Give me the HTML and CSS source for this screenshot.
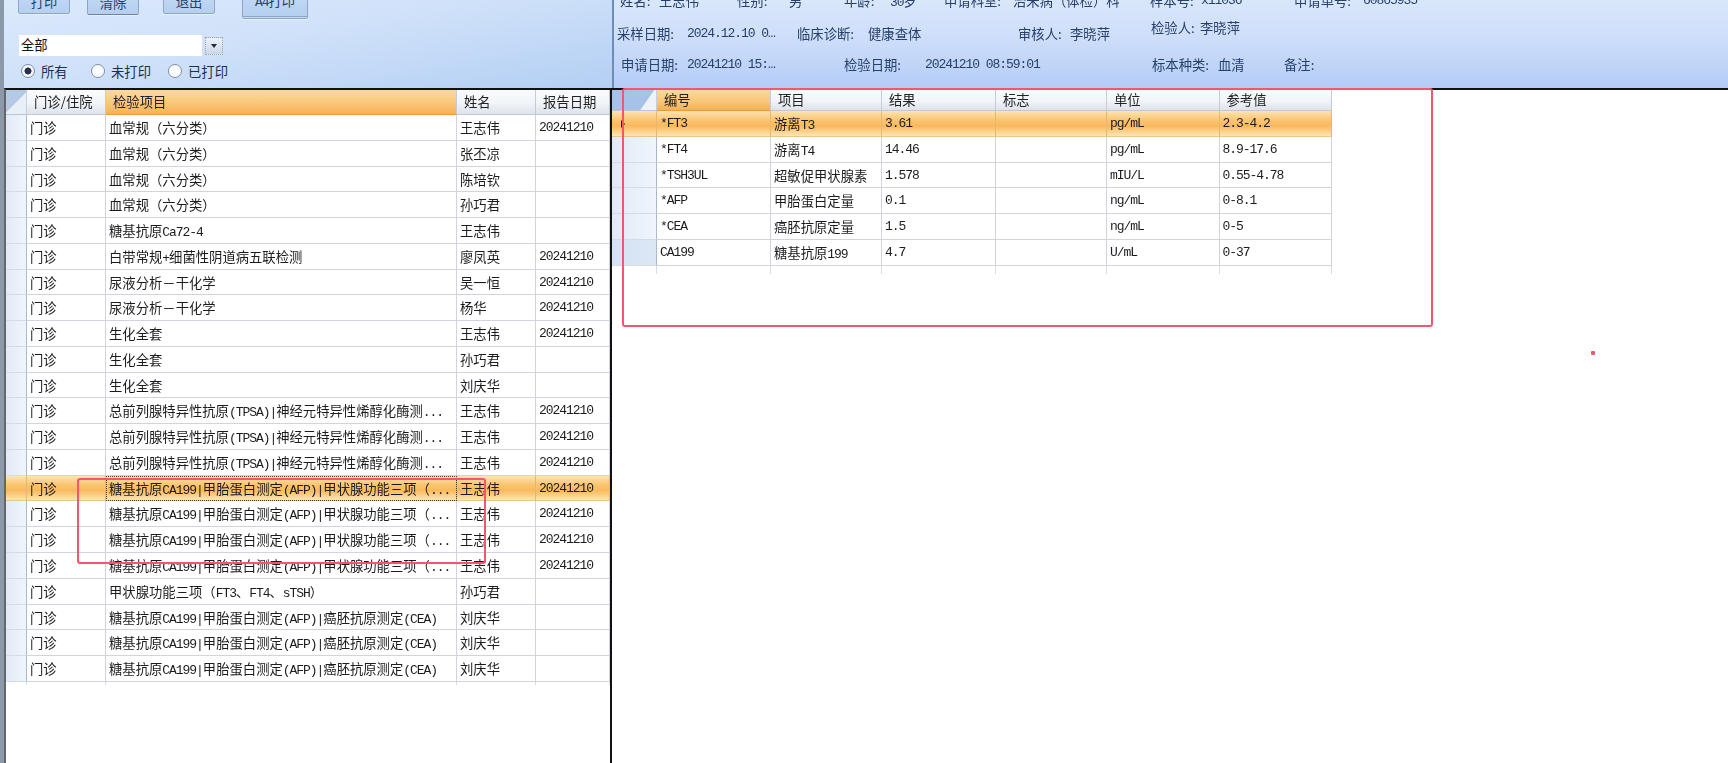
FILE: index.html
```html
<!DOCTYPE html>
<html lang="zh-CN">
<head>
<meta charset="utf-8">
<title>报告打印</title>
<link rel="stylesheet" href="styles.css">
</head>
<body>
<div class="page">
  <section class="left">
    <div class="toolbar">
      <div class="buttons">
        <button class="btn">打印</button>
        <button class="btn btn-clear">清除</button>
        <button class="btn btn-exit">退出</button>
        <button class="btn btn-a4"><span class="m">A4</span>打印</button>
      </div>
      <div class="combo"><span class="combo-text">全部</span><span class="combo-arrow"></span></div>
      <div class="radios">
        <span class="radio on"></span><span class="radio-label">所有</span>
        <span class="radio"></span><span class="radio-label">未打印</span>
        <span class="radio"></span><span class="radio-label">已打印</span>
      </div>
    </div>
    <div class="grid-left">
      <div class="lrow lhead">
        <div class="corner"></div>
        <div class="hc">门诊/住院</div>
        <div class="hc hc-on">检验项目</div>
        <div class="hc">姓名</div>
        <div class="hc">报告日期</div>
      </div>
      <div class="lrow"><div class="rh"></div><div class="c">门诊</div><div class="c">血常规（六分类）</div><div class="c">王志伟</div><div class="c m">20241210</div></div>
      <div class="lrow"><div class="rh"></div><div class="c">门诊</div><div class="c">血常规（六分类）</div><div class="c">张丕凉</div><div class="c m"></div></div>
      <div class="lrow"><div class="rh"></div><div class="c">门诊</div><div class="c">血常规（六分类）</div><div class="c">陈培钦</div><div class="c m"></div></div>
      <div class="lrow"><div class="rh"></div><div class="c">门诊</div><div class="c">血常规（六分类）</div><div class="c">孙巧君</div><div class="c m"></div></div>
      <div class="lrow"><div class="rh"></div><div class="c">门诊</div><div class="c">糖基抗原<span class="m">Ca72-4</span></div><div class="c">王志伟</div><div class="c m"></div></div>
      <div class="lrow"><div class="rh"></div><div class="c">门诊</div><div class="c">白带常规<span class="m">+</span>细菌性阴道病五联检测</div><div class="c">廖凤英</div><div class="c m">20241210</div></div>
      <div class="lrow"><div class="rh"></div><div class="c">门诊</div><div class="c">尿液分析－干化学</div><div class="c">吴一恒</div><div class="c m">20241210</div></div>
      <div class="lrow"><div class="rh"></div><div class="c">门诊</div><div class="c">尿液分析－干化学</div><div class="c">杨华</div><div class="c m">20241210</div></div>
      <div class="lrow"><div class="rh"></div><div class="c">门诊</div><div class="c">生化全套</div><div class="c">王志伟</div><div class="c m">20241210</div></div>
      <div class="lrow"><div class="rh"></div><div class="c">门诊</div><div class="c">生化全套</div><div class="c">孙巧君</div><div class="c m"></div></div>
      <div class="lrow"><div class="rh"></div><div class="c">门诊</div><div class="c">生化全套</div><div class="c">刘庆华</div><div class="c m"></div></div>
      <div class="lrow"><div class="rh"></div><div class="c">门诊</div><div class="c">总前列腺特异性抗原<span class="m">(TPSA)|</span>神经元特异性烯醇化酶测<span class="m">...</span></div><div class="c">王志伟</div><div class="c m">20241210</div></div>
      <div class="lrow"><div class="rh"></div><div class="c">门诊</div><div class="c">总前列腺特异性抗原<span class="m">(TPSA)|</span>神经元特异性烯醇化酶测<span class="m">...</span></div><div class="c">王志伟</div><div class="c m">20241210</div></div>
      <div class="lrow"><div class="rh"></div><div class="c">门诊</div><div class="c">总前列腺特异性抗原<span class="m">(TPSA)|</span>神经元特异性烯醇化酶测<span class="m">...</span></div><div class="c">王志伟</div><div class="c m">20241210</div></div>
      <div class="lrow sel"><div class="rh"></div><div class="c">门诊</div><div class="c focus">糖基抗原<span class="m">CA199|</span>甲胎蛋白测定<span class="m">(AFP)|</span>甲状腺功能三项（<span class="m">...</span></div><div class="c">王志伟</div><div class="c m">20241210</div></div>
      <div class="lrow"><div class="rh"></div><div class="c">门诊</div><div class="c">糖基抗原<span class="m">CA199|</span>甲胎蛋白测定<span class="m">(AFP)|</span>甲状腺功能三项（<span class="m">...</span></div><div class="c">王志伟</div><div class="c m">20241210</div></div>
      <div class="lrow"><div class="rh"></div><div class="c">门诊</div><div class="c">糖基抗原<span class="m">CA199|</span>甲胎蛋白测定<span class="m">(AFP)|</span>甲状腺功能三项（<span class="m">...</span></div><div class="c">王志伟</div><div class="c m">20241210</div></div>
      <div class="lrow"><div class="rh"></div><div class="c">门诊</div><div class="c">糖基抗原<span class="m">CA199|</span>甲胎蛋白测定<span class="m">(AFP)|</span>甲状腺功能三项（<span class="m">...</span></div><div class="c">王志伟</div><div class="c m">20241210</div></div>
      <div class="lrow"><div class="rh"></div><div class="c">门诊</div><div class="c">甲状腺功能三项（<span class="m">FT3</span>、<span class="m">FT4</span>、<span class="m">sTSH</span>）</div><div class="c">孙巧君</div><div class="c m"></div></div>
      <div class="lrow"><div class="rh"></div><div class="c">门诊</div><div class="c">糖基抗原<span class="m">CA199|</span>甲胎蛋白测定<span class="m">(AFP)|</span>癌胚抗原测定<span class="m">(CEA)</span></div><div class="c">刘庆华</div><div class="c m"></div></div>
      <div class="lrow"><div class="rh"></div><div class="c">门诊</div><div class="c">糖基抗原<span class="m">CA199|</span>甲胎蛋白测定<span class="m">(AFP)|</span>癌胚抗原测定<span class="m">(CEA)</span></div><div class="c">刘庆华</div><div class="c m"></div></div>
      <div class="lrow"><div class="rh"></div><div class="c">门诊</div><div class="c">糖基抗原<span class="m">CA199|</span>甲胎蛋白测定<span class="m">(AFP)|</span>癌胚抗原测定<span class="m">(CEA)</span></div><div class="c">刘庆华</div><div class="c m"></div></div>
      <div class="lrow lstub"><div></div><div></div><div></div><div></div><div></div></div>
    </div>
  </section>

  <section class="right">
    <div class="info">
      <div class="info-row r1">
        <span>姓名:</span><span>王志伟</span>
        <span>性别:</span><span>男</span>
        <span>年龄:</span><span><span class="m">30</span>岁</span>
        <span>申请科室:</span><span>治未病（体检）科</span>
        <span>样本号:</span><span class="m">x11036</span>
        <span>申请单号:</span><span class="m">60865935</span>
      </div>
      <div class="info-row r2">
        <span>采样日期:</span><span class="m">2024.12.10 0…</span>
        <span>临床诊断:</span><span>健康查体</span>
        <span>审核人:</span><span>李晓萍</span>
        <span class="raised">检验人:</span><span class="raised">李晓萍</span>
      </div>
      <div class="info-row r3">
        <span>申请日期:</span><span class="m">20241210 15:…</span>
        <span>检验日期:</span><span class="m">20241210 08:59:01</span>
        <span>标本种类:</span><span>血清</span>
        <span>备注:</span>
      </div>
    </div>
    <div class="grid-right">
      <div class="rrow rhead">
        <div class="corner corner-r"></div>
        <div class="hc hc-on">编号</div>
        <div class="hc">项目</div>
        <div class="hc">结果</div>
        <div class="hc">标志</div>
        <div class="hc">单位</div>
        <div class="hc">参考值</div>
      </div>
      <div class="rrow sel"><div class="rh"><span class="marker"></span></div><div class="c m">*FT3</div><div class="c">游离<span class="m">T3</span></div><div class="c m">3.61</div><div class="c"></div><div class="c m">pg/mL</div><div class="c m">2.3-4.2</div></div>
      <div class="rrow"><div class="rh"></div><div class="c m">*FT4</div><div class="c">游离<span class="m">T4</span></div><div class="c m">14.46</div><div class="c"></div><div class="c m">pg/mL</div><div class="c m">8.9-17.6</div></div>
      <div class="rrow"><div class="rh"></div><div class="c m">*TSH3UL</div><div class="c">超敏促甲状腺素</div><div class="c m">1.578</div><div class="c"></div><div class="c m">mIU/L</div><div class="c m">0.55-4.78</div></div>
      <div class="rrow"><div class="rh"></div><div class="c m">*AFP</div><div class="c">甲胎蛋白定量</div><div class="c m">0.1</div><div class="c"></div><div class="c m">ng/mL</div><div class="c m">0-8.1</div></div>
      <div class="rrow"><div class="rh"></div><div class="c m">*CEA</div><div class="c">癌胚抗原定量</div><div class="c m">1.5</div><div class="c"></div><div class="c m">ng/mL</div><div class="c m">0-5</div></div>
      <div class="rrow"><div class="rh rh-blue"></div><div class="c m">CA199</div><div class="c">糖基抗原<span class="m">199</span></div><div class="c m">4.7</div><div class="c"></div><div class="c m">U/mL</div><div class="c m">0-37</div></div>
      <div class="rrow rstub"><div></div><div></div><div></div><div></div><div></div><div></div><div></div></div>
    </div>
  </section>

  <div class="mark mark-left"></div>
  <div class="mark mark-right"></div>
  <div class="pen-dot"></div>
</div>
</body>
</html>
```

FILE: styles.css
```css
* { box-sizing: border-box; }

html, body {
  margin: 0;
  height: 100%;
  background: #fff;
  overflow: hidden;
}

body {
  font-family: "Noto Sans CJK SC", "Liberation Sans", sans-serif;
  font-size: 13.33px;
  color: #1c1c1c;
}

.page {
  position: relative;
  display: flex;
  width: 1728px;
  height: 763px;
  overflow: hidden;
  filter: blur(0.35px);
}

.m {
  font-family: "Liberation Mono", "Noto Sans CJK SC", monospace;
  font-size: 13px;
  letter-spacing: -1.05px;
}

/* left column */
.left {
  display: flex;
  flex-direction: column;
  flex: 0 0 612px;
  border-left: 4px solid #8c99aa;
}

.toolbar {
  flex: 0 0 88px;
  overflow: hidden;
  background: linear-gradient(170deg, #dbe9fb 0%, #cfe1f9 45%, #b3cff4 100%);
}

.buttons {
  display: flex;
  align-items: flex-start;
  padding-left: 14px;
  margin-top: -10px;
}

.btn {
  width: 52px;
  height: 24px;
  padding: 0;
  border: 1px solid #8ea6c6;
  border-radius: 2px;
  background: linear-gradient(#c6daf5, #b5cff0);
  box-shadow: 0 1px 0 #e6f0fc;
  font: inherit;
  line-height: 22px;
  color: #27406a;
}

.btn-clear { height: 25px; margin-left: 17px; border-bottom-color: #6f849f; }
.btn-exit { margin-left: 24px; }
.btn-a4 {
  width: 66px;
  height: 29px;
  margin-left: 27px;
  padding-bottom: 3px;
  border-bottom: 3px double #8ea6c6;
  line-height: 20px;
}

.combo {
  display: flex;
  align-items: center;
  width: 204px;
  height: 21px;
  margin: 16px 0 0 15px;
}

.combo-text {
  flex: 0 0 183px;
  height: 21px;
  padding-left: 2px;
  background: #fff;
  line-height: 20px;
  color: #111;
}

.combo-arrow {
  position: relative;
  flex: 0 0 18px;
  height: 18px;
  margin-left: 3px;
  border: 1px dotted #9aa6b6;
  background: linear-gradient(#edf2f9, #cbd6e6);
}

.combo-arrow::after {
  content: "";
  position: absolute;
  left: 5px;
  top: 6px;
  border: 3px solid transparent;
  border-top: 4px solid #1c2c44;
  border-bottom: 0;
}

.radios {
  display: flex;
  align-items: center;
  height: 16px;
  margin: 7px 0 0 17px;
  color: #1d3050;
}

.radio {
  flex: 0 0 14px;
  height: 14px;
  border: 1px solid #7d8ea6;
  border-radius: 50%;
  background: #fbfdff;
}

.radio.on {
  background: radial-gradient(circle, #26324a 0 3.2px, #f4f7fb 3.8px);
}

.radio-label { margin-left: 6px; }
.radio-label:nth-of-type(2) { width: 50px; }
.radio-label:nth-of-type(4) { width: 57px; }

/* grids */
.grid-left {
  flex: 1;
  border-top: 2px solid #111;
  border-left: 2px solid #666;
  border-right: 2px solid #111;
}

.lrow, .rrow {
  display: grid;
  height: 25.77px;
  line-height: 25px;
}

.lrow { grid-template-columns: 21px 79px 351px 79px 74px; }
.rrow { grid-template-columns: 45px 114px 111px 114px 111px 112.5px 112.5px; width: 720px; line-height: 26px; }

.lhead { height: 25px; line-height: 24px; }
.rhead { height: 21px; line-height: 20px; }

.corner {
  background: linear-gradient(135deg, #b4c9e6 50%, #e9eff7 52%);
  border-right: 1px solid #c3d0e0;
  border-bottom: 1px solid #b8c6d8;
}

.corner-r {
  background: linear-gradient(125deg, #a6c2e9 72%, #eef3fa 74%);
}

.hc {
  padding-left: 7px;
  background: linear-gradient(#f9fbfd, #f1f4f8 55%, #dde3ea);
  border-right: 1px solid #c4ccd8;
  border-bottom: 1px solid #c0c8d2;
  color: #222;
  white-space: nowrap;
}

.hc-on {
  background: linear-gradient(#fbd99f, #f9c778 55%, #f5b157);
  border-bottom-color: #ef9a38;
}

.c {
  padding-left: 3px;
  border-right: 1px solid #d0d4dc;
  border-bottom: 1px solid #d0d4dc;
  background: #fff;
  white-space: nowrap;
  overflow: hidden;
}

.rh {
  position: relative;
  background: linear-gradient(90deg, #e0eaf7, #f0f5fb);
  border-right: 1px solid #a9b9ce;
  border-bottom: 1px solid #d4dbe6;
}

.rh-blue { background: linear-gradient(90deg, #d3e2f4, #dde8f6); }

.sel .c, .sel .rh {
  background: linear-gradient(#fde4b4, #fbc673 35%, #f9b95c 60%, #fde5b6);
  border-bottom-color: #e9c48c;
  border-right-color: #e8b76e;
}

.sel .focus {
  outline: 1px dotted #4a3a20;
  outline-offset: -1px;
}

.marker {
  position: absolute;
  left: 9px;
  top: 9px;
  border: 4px solid transparent;
  border-left: 4px solid #1a1a1a;
  border-right: 0;
}

.lstub { height: 3px; }
.rstub { height: 8px; }
.lstub div, .rstub div { border-right: 1px solid #d8dce3; }

/* right column */
.right {
  display: flex;
  flex-direction: column;
  flex: 1;
}

.info {
  flex: 0 0 88px;
  overflow: hidden;
  border-left: 2px solid #6d8db6;
  background: linear-gradient(#d9e7fb, #cfdffa 40%, #b4ccf6);
  color: #27406a;
  white-space: nowrap;
}

.info-row {
  display: grid;
  height: 16px;
  line-height: 16px;
}

.r1 {
  margin-top: -7px;
  padding-left: 6px;
  grid-template-columns: 39px 78px 52px 55px 46px 54px 69px 137px 51px 93px 69px 1fr;
}

.r2 {
  margin-top: 17px;
  padding-left: 3px;
  grid-template-columns: 70px 110px 71px 150px 52px 81px 49px 1fr;
}

.r3 {
  margin-top: 15px;
  padding-left: 7px;
  grid-template-columns: 66px 157px 81px 227px 66px 66px 1fr;
}

.raised { margin-top: -6px; }

.grid-right {
  flex: 1;
  border-top: 2px solid #111;
}

/* markings drawn over the screen */
.mark {
  position: absolute;
  border: 2.5px solid #f6566d;
  border-radius: 3px;
}

.mark-left { left: 77px; top: 478px; width: 409px; height: 86px; }
.mark-right { left: 622px; top: 88px; width: 811px; height: 239px; }

.pen-dot {
  position: absolute;
  left: 1591px;
  top: 351px;
  width: 4px;
  height: 4px;
  border-radius: 1px;
  background: #f4566c;
}
```
